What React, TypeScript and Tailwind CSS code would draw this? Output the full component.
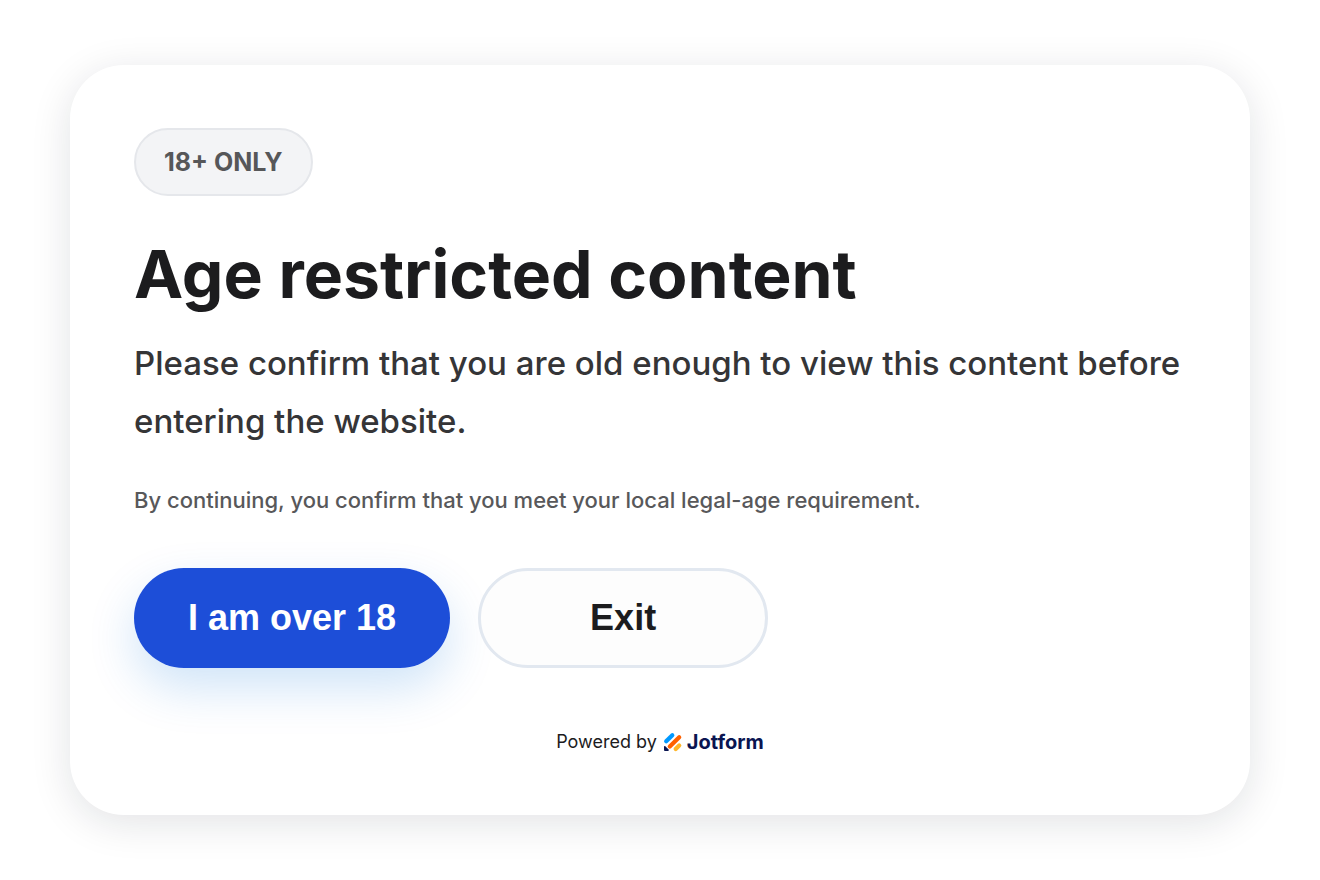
const JotformMark = () => (
  <svg viewBox="0 0 20 20" className="h-5 w-5" fill="none" aria-hidden="true">
    <path d="M3.2 9.3 9.3 3.2" stroke="#0099FF" strokeWidth="4.2" strokeLinecap="round" />
    <path d="M6.8 14.6 16.2 5.2" stroke="#FF6100" strokeWidth="4.2" strokeLinecap="round" />
    <path d="M12.7 17 16.2 13.5" stroke="#FFB629" strokeWidth="4.2" strokeLinecap="round" />
    <path d="M1 14.8c0-.7.8-1 1.3-.5l3.3 3.3c.5.5.1 1.4-.5 1.4H2a1 1 0 0 1-1-1z" fill="#0A1551" />
  </svg>
);

const AgeGate = () => {
  return (
    <section
      aria-labelledby="age-gate-title"
      className="rounded-[54px] bg-white px-16 pt-[63px] pb-[59px] shadow-[0_8px_40px_rgba(15,23,42,0.12)]"
    >
      <span className="inline-flex h-[68px] items-center rounded-full border-2 border-[#e5e7eb] bg-[#f3f4f6] px-7 text-[25px] leading-8 font-bold text-[#565759]">
        18+ ONLY
      </span>

      <h1 id="age-gate-title" className="mt-10 text-[66px] leading-[76px] font-bold text-[#1c1c1e]">
        Age restricted content
      </h1>
      <p className="mt-[22px] text-[33px] leading-[58px] font-medium text-[#353537]">
        Please confirm that you are old enough to view this content before entering the website.
      </p>
      <p className="mt-8 text-[22px] leading-9 font-medium text-[#58585a]">
        By continuing, you confirm that you meet your local legal-age requirement.
      </p>

      <div className="mt-[50px] flex flex-wrap gap-7 font-['Liberation_Sans',Arial,sans-serif] text-[36px] font-bold">
        <button
          type="button"
          className="h-[100px] rounded-full bg-[#1d4ed8] px-[54px] text-white shadow-[0_20px_48px_rgba(0,110,220,0.19)]"
        >
          I am over 18
        </button>
        <button
          type="button"
          className="h-[100px] min-w-[290px] rounded-full border-[3px] border-[#e2e8f0] bg-[#fdfdfd] px-12 text-[#1c1c1e]"
        >
          Exit
        </button>
      </div>

      <div className="mt-[60px] flex items-center justify-center gap-1.5 text-[18px] leading-7 text-[#1c1c1e]">
        <span>Powered by</span>
        <a href="#jotform" className="flex items-center gap-1 text-[20px] font-bold text-[#0a1551]">
          <JotformMark />
          Jotform
        </a>
      </div>
    </section>
  );
};

export default function App() {
  return (
    <main className="min-h-screen bg-white px-[70px] py-[65px] font-['Inter',sans-serif]">
      <AgeGate />
    </main>
  );
}
